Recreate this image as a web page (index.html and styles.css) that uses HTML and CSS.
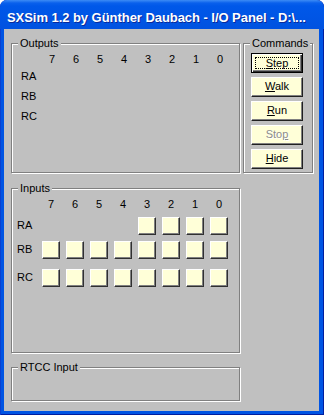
FILE: index.html
```html
<!DOCTYPE html>
<html>
<head>
<meta charset="utf-8">
<link rel="stylesheet" href="styles.css">
</head>
<body>
<div class="window">
  <div class="titlebar"><span class="title">SXSim 1.2 by Günther Daubach - I/O Panel - D:\...</span></div>
  <div class="client">
    <div class="top">
      <div class="group outputs">
        <span class="legend">Outputs</span>
        <div class="ogrid">
          <span></span><span class="num">7</span><span class="num">6</span><span class="num">5</span><span class="num">4</span><span class="num">3</span><span class="num">2</span><span class="num">1</span><span class="num">0</span>
          <span class="lbl">RA</span><span class="fill"></span>
          <span class="lbl">RB</span><span class="fill"></span>
          <span class="lbl">RC</span><span class="fill"></span>
        </div>
      </div>
      <div class="group commands">
        <span class="legend">Commands</span>
        <div class="btns">
          <div class="btn default"><span class="focus"><u>S</u>tep</span></div>
          <div class="btn"><u>W</u>alk</div>
          <div class="btn"><u>R</u>un</div>
          <div class="btn disabled">Sto<u>p</u></div>
          <div class="btn"><u>H</u>ide</div>
        </div>
      </div>
    </div>
    <div class="group inputs">
      <span class="legend">Inputs</span>
      <div class="igrid">
        <span></span><span class="num">7</span><span class="num">6</span><span class="num">5</span><span class="num">4</span><span class="num">3</span><span class="num">2</span><span class="num">1</span><span class="num">0</span>
        <span class="lbl">RA</span><span></span><span></span><span></span><span></span><span class="box"></span><span class="box"></span><span class="box"></span><span class="box"></span>
        <span class="lbl">RB</span><span class="box"></span><span class="box"></span><span class="box"></span><span class="box"></span><span class="box"></span><span class="box"></span><span class="box"></span><span class="box"></span>
        <span class="lbl">RC</span><span class="box"></span><span class="box"></span><span class="box"></span><span class="box"></span><span class="box"></span><span class="box"></span><span class="box"></span><span class="box"></span>
      </div>
    </div>
    <div class="group rtcc">
      <span class="legend">RTCC Input</span>
    </div>
  </div>
</div>
</body>
</html>
```
FILE: styles.css
```css
html, body {
  margin: 0;
  padding: 0;
  background: #ffffff;
}
.window {
  width: 324px;
  height: 415px;
  box-sizing: border-box;
  background: #0054e3;
  border-radius: 7px 7px 0 0;
  box-shadow: inset 1px 0 0 #0a3fd0, inset -1px 0 0 #001ea0, inset 0 -1px 0 #001ea0;
  display: flex;
  flex-direction: column;
  overflow: hidden;
}
.titlebar {
  height: 29px;
  box-sizing: border-box;
  padding: 8px 0 0 7px;
  background: linear-gradient(to bottom, #3d8cf5 0px, #0a60ec 3px, #0058e9 6px, #0055e5 60%, #0052e0 100%);
  border-radius: 7px 7px 0 0;
  white-space: nowrap;
  overflow: hidden;
}
.title {
  font-family: "Liberation Sans", Arial, sans-serif;
  font-weight: bold;
  font-size: 13px;
  line-height: 15px;
  color: #ffffff;
  letter-spacing: -0.05px;
  text-shadow: 1px 1px 0 #0a2a9a;
}
.client {
  margin: 0 5px 4px 4px;
  flex: 1;
  background: #c0c0c0;
  padding: 14px 0 0 7px;
  box-sizing: border-box;
  font-family: "Liberation Sans", Arial, sans-serif;
  font-size: 11px;
  line-height: 13px;
  color: #000;
  display: flex;
  flex-direction: column;
}
.top {
  display: flex;
  gap: 3px;
}
.group {
  position: relative;
  box-sizing: border-box;
  border: 1px solid #808080;
  box-shadow: inset 1px 1px 0 #ffffff, 1px 1px 0 #ffffff;
}
.legend {
  position: absolute;
  top: -7px;
  left: 6px;
  padding: 0 2px 0 2px;
  background: #c0c0c0;
  white-space: nowrap;
}
.outputs {
  width: 229px;
  height: 130px;
  padding: 9px 0 0 9px;
}
.commands {
  width: 70px;
  height: 130px;
  padding: 9px 0 0 7px;
}
.inputs {
  width: 229px;
  height: 165px;
  margin-top: 15px;
  padding: 9px 0 0 5px;
}
.rtcc {
  width: 229px;
  height: 34px;
  margin-top: 14px;
}
.ogrid {
  display: grid;
  grid-template-columns: 19px repeat(8, 24px);
  grid-template-rows: 17px 20px 20px 20px;
}
.ogrid .fill {
  grid-column: 2 / span 8;
}
.num {
  text-align: center;
}
.igrid {
  display: grid;
  grid-template-columns: 22px repeat(8, 24px);
  grid-template-rows: 19px 24px 28px 18px;
}
.igrid .lbl {
  padding-top: 2px;
}
.box {
  justify-self: center;
  align-self: start;
  width: 18px;
  height: 18px;
  box-sizing: border-box;
  background: #ffffd8;
  border-top: 1px solid #ffffff;
  border-left: 1px solid #ffffff;
  border-right: 1px solid #303030;
  border-bottom: 1px solid #303030;
  box-shadow: inset -1px -1px 0 #808080;
}
.btns {
  display: flex;
  flex-direction: column;
  gap: 4px;
}
.btn {
  width: 52px;
  height: 20px;
  box-sizing: border-box;
  background: #ffffd8;
  border-top: 1px solid #ffffff;
  border-left: 1px solid #ffffff;
  border-right: 1px solid #202020;
  border-bottom: 1px solid #202020;
  box-shadow: inset -1px -1px 0 #808080;
  text-align: center;
  line-height: 17px;
}
.btn.default {
  border: 1px solid #000000;
  box-shadow: inset 1px 1px 0 #ffffff, inset -1px -1px 0 #303030, inset -2px -2px 0 #808080;
  display: flex;
  padding: 3px;
}
.btn.default .focus {
  flex: 1;
  border: 1px dotted #000000;
  line-height: 10px;
}
.btn.disabled {
  color: #8c8c8c;
  text-shadow: 1px 1px 0 #ffffff;
}
```
